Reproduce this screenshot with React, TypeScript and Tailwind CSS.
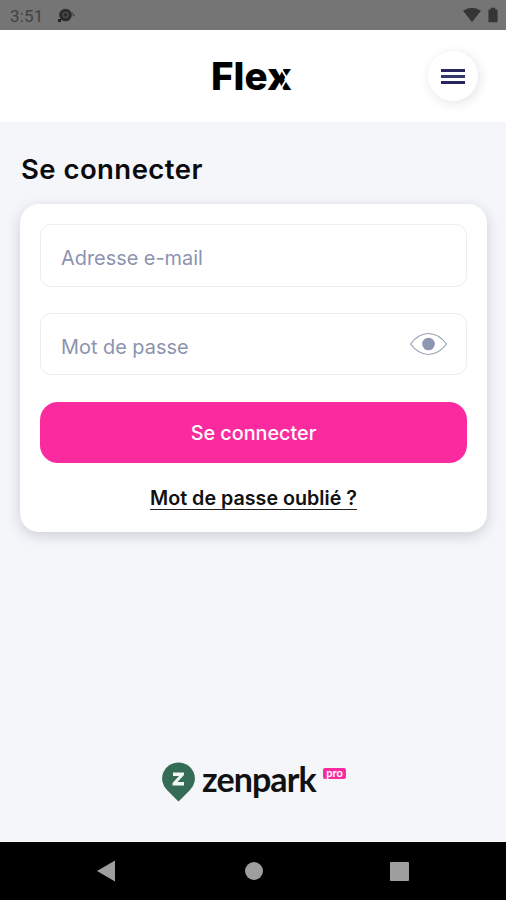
import React from "react";

function StatusBar() {
  return (
    <div className="flex h-[30px] shrink-0 items-center bg-[#757575] pl-[10px] pr-[8px] text-[#424242]">
      <span className="w-[48px] pt-[2px] font-[Roboto,sans-serif] text-[17px] leading-[28px] tracking-[0.2px]">3:51</span>
      <svg className="h-[16px] w-[18px]" viewBox="0 0 18 16">
        <circle cx="7.5" cy="8" r="4.8" fill="#4a4a4a" stroke="#2b2b2b" strokeWidth="3" />
        <circle cx="7.5" cy="8" r="1.7" fill="#292929" />
        <path d="M0 12h3v3H0z" fill="#222" />
        <path d="M14 5l3 3-2 2z" fill="#4b4b4b" />
      </svg>
      <svg className="ml-auto h-[16px] w-[18px]" viewBox="0 0 19 16">
        <path d="M0 3.5Q9.500-3 19 3.500L9.500 15.500Z" fill="#353535" />
      </svg>
      <svg className="ml-[7px] h-[16px] w-[10px]" viewBox="0 0 11 16">
        <path d="M3 0h5v2h2.500v14H.5V2H3z" fill="#353535" />
      </svg>
    </div>
  );
}

function Header() {
  return (
    <header className="flex h-[92px] shrink-0 items-center justify-between bg-white pl-[211px] pr-[28px]">
      <div className="relative h-[40px] w-[82px]">
        <span className="block whitespace-nowrap font-[Inter,sans-serif] text-[38.5px] font-extrabold leading-[40px] text-black">Fle<span className="-ml-[1px] inline-block origin-left scale-x-[1.09]">x</span></span>
        <svg className="absolute left-[56px] top-[7px] h-[28px] w-[28px]" viewBox="0 0 28 28">
          <path d="M12.500 3L20 15.500L12.500 28" fill="none" stroke="#fff" strokeWidth="1.800" />
        </svg>
      </div>
      <button aria-label="Menu" className="flex size-[50px] flex-col items-center justify-center gap-[3px] rounded-full bg-white shadow-[2px_2px_12px_rgba(0,0,0,0.11)]">
        <span className="h-[3px] w-[24px] bg-[#272560]" />
        <span className="h-[3px] w-[24px] bg-[#35376f]" />
        <span className="h-[3px] w-[24px] bg-[#272560]" />
      </button>
    </header>
  );
}

function Eye() {
  return (
    <svg className="h-[26px] w-[38px]" viewBox="0 0 38 26">
      <path d="M1.500 13Q9.500 2.500 19.500 2.500T37.500 13Q29.500 23.500 19.500 23.500T1.500 13Z" fill="none" stroke="#98a0b5" strokeWidth="1.200" />
      <circle cx="19.500" cy="13" r="6.300" fill="#8c96b0" />
    </svg>
  );
}

function LoginCard() {
  return (
    <section className="mx-[20px] mr-[19px] mt-[18px] flex h-[328px] flex-col rounded-[19px] bg-white px-[20px] pt-[20px] shadow-[0_4px_14px_rgba(30,35,50,0.18)]">
      <div className="flex h-[63px] items-center rounded-[11px] border border-[#ececf0] px-[20px] pt-[5px]">
        <span className="font-[Inter,sans-serif] text-[19.9px] leading-[24px] text-[#8c93ae]">Adresse e-mail</span>
      </div>
      <div className="mt-[26px] flex h-[62px] items-center justify-between rounded-[11px] border border-[#ececf0] pl-[20px] pr-[19px]">
        <span className="pt-[5px] font-[Inter,sans-serif] text-[19.9px] leading-[24px] text-[#8c93ae]">Mot de passe</span>
        <Eye />
      </div>
      <button className="mt-[27px] flex h-[61px] items-center justify-center rounded-[18px] bg-[#fb2b9f] pt-[2px] font-[Inter,sans-serif] text-[19.8px] font-medium text-white">
        Se connecter
      </button>
      <a className="mt-[24px] self-center border-b border-[#222] font-[Inter,sans-serif] text-[19.7px] font-semibold leading-[22px] text-[#111]">Mot de passe oublié ?</a>
    </section>
  );
}

function Brand() {
  return (
    <div className="mt-auto mb-[38px] flex h-[42px] items-start pl-[162px]">
      <svg className="h-[40px] w-[33px] shrink-0" viewBox="0 0 33 40">
        <path d="M16.500 0.500A16 16 0 0 1 28 28L16.500 39.500L5 28A16 16 0 0 1 16.500 0.500Z" fill="#346c55" />
        <path d="M11 10.500H22V13L15.500 20H22V23.500H10.500V21L17 14H11Z" fill="#f2f7f4" />
      </svg>
      <span className="ml-[7px] w-[115px] whitespace-nowrap font-[Lato,sans-serif] text-[34px] font-bold leading-[34px] tracking-[-0.9px] text-[#111]">zenpark</span>
      <span className="ml-[6px] mt-[6px] flex h-[11px] w-[23px] items-center justify-center rounded-[2px] bg-[#fb2b9f] pb-[2px] font-[Lato,sans-serif] text-[11px] font-bold leading-[11px] text-white">pro</span>
    </div>
  );
}

function NavigationBar() {
  return (
    <nav className="flex h-[58px] shrink-0 items-center bg-black pl-[97px]">
      <svg className="h-[22px] w-[18px]" viewBox="0 0 18 22">
        <path d="M0 11L18 .5v21z" fill="#9e9e9e" />
      </svg>
      <span className="ml-[130px] size-[18px] rounded-full bg-[#9e9e9e]" />
      <span className="ml-[127px] size-[19px] rounded-[1px] bg-[#9e9e9e]" />
    </nav>
  );
}

export default function App() {
  return (
    <div className="flex h-[900px] w-[506px] flex-col overflow-hidden bg-[#f4f6fa]">
      <StatusBar />
      <Header />
      <h1 className="ml-[21px] mt-[30px] font-[Inter,sans-serif] text-[27.5px] font-semibold leading-[34px] tracking-[0.45px] text-[#0b0b0f]">Se connecter</h1>
      <LoginCard />
      <Brand />
      <NavigationBar />
    </div>
  );
}
